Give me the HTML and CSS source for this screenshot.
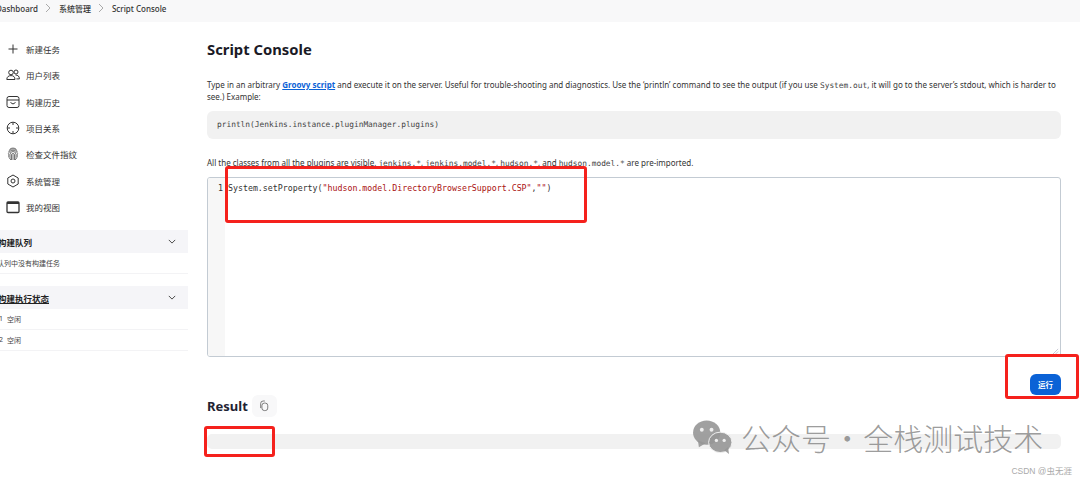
FILE: index.html
```html
<!DOCTYPE html>
<html lang="zh">
<head>
<meta charset="utf-8">
<title>Script Console</title>
<link rel="stylesheet" href="styles.css">
</head>
<body>
<nav class="crumbs">
  <span class="crumb first">Dashboard</span>
  <svg class="sep" viewBox="0 0 8 10"><path d="M2 1l4 4-4 4"/></svg>
  <span class="crumb">系统管理</span>
  <svg class="sep" viewBox="0 0 8 10"><path d="M2 1l4 4-4 4"/></svg>
  <span class="crumb">Script Console</span>
</nav>
<div class="page">
  <aside class="side">
    <ul class="tasks">
      <li><svg class="ico" viewBox="0 0 14 14"><path d="M7 2.500v9M2.500 7h9"/></svg>新建任务</li>
      <li><svg class="ico" viewBox="0 0 14 14"><circle cx="5" cy="4.500" r="2.300"/><circle cx="10" cy="4" r="2"/><path d="M.8 11.500c0-2.600 1.700-3.900 4.200-3.900s4 1.300 4 3.900zM9.500 7c2.400 0 3.900 1.300 3.900 3.900h-3"/></svg>用户列表</li>
      <li><svg class="ico" viewBox="0 0 14 14"><rect x="1" y="1.500" width="12" height="11" rx="2"/><path d="M1 5h12M4.500 7.500l2.500 1.500 2.500-1.500"/></svg>构建历史</li>
      <li><svg class="ico" viewBox="0 0 14 14"><circle cx="7" cy="7" r="5.800"/><path d="M7 1.500v2.500M7 10v2.500M1.500 7H4M10 7h2.500"/></svg>项目关系</li>
      <li><svg class="ico print" viewBox="0 0 14 14"><path d="M3.500 2.500a5 5 0 0 1 7 0M2.500 4.500a5.300 5.300 0 0 1 9 0M2.200 6.800a5 5 0 0 1 9.600 0M2.800 7v3.500M11.200 7v3.500M4 7.500a3 3 0 0 1 6 0V12M4 7.500V12M5.500 8a1.500 1.500 0 0 1 3 0v5M5.500 8v5M7 7.500V13M3.500 11.500l1.500 1.500M10.500 11.500L9 13"/></svg>检查文件指纹</li>
      <li><svg class="ico" viewBox="0 0 14 14"><path d="M7 1l5.200 3v6L7 13l-5.200-3V4z"/><circle cx="7" cy="7" r="2"/></svg>系统管理</li>
      <li><svg class="ico window" viewBox="0 0 14 14"><rect x="1" y="2" width="12" height="10.500" rx="1"/><path class="bar" d="M1 3h12"/></svg>我的视图</li>
    </ul>
    <section class="pane">
      <header class="pane-head"><span class="clip">构建队列</span><svg class="chev" viewBox="0 0 10 6"><path d="M1 1l4 4 4-4"/></svg></header>
      <div class="pane-row"><span class="clip-row">队列中没有构建任务</span></div>
    </section>
    <section class="pane">
      <header class="pane-head"><span class="clip under">构建执行状态</span><svg class="chev" viewBox="0 0 10 6"><path d="M1 1l4 4 4-4"/></svg></header>
      <div class="pane-row"><span class="num">1</span>空闲</div>
      <div class="pane-row"><span class="num">2</span>空闲</div>
    </section>
  </aside>
  <main class="main">
    <h1>Script Console</h1>
    <p class="intro">Type in an arbitrary <a href="#">Groovy script</a> and execute it on the server. Useful for trouble-shooting and diagnostics. Use the ‘println’ command to see the output (if you use <code>System.out</code>, it will go to the server’s stdout, which is harder to see.) Example:</p>
    <pre class="sample">println(Jenkins.instance.pluginManager.plugins)</pre>
    <p class="note">All the classes from all the plugins are visible. <code>jenkins.*</code>, <code>jenkins.model.*</code>, <code>hudson.*</code>, and <code>hudson.model.*</code> are pre-imported.</p>
    <div class="editor">
      <div class="gutter">1</div>
      <div class="code">System.setProperty(<span class="str">"hudson.model.DirectoryBrowserSupport.CSP"</span>,<span class="str">""</span>)</div>
      <svg class="grip" viewBox="0 0 8 8"><path d="M7 1L1 7M7 4L4 7"/></svg>
    </div>
    <div class="actions"><button class="run">运行</button></div>
    <div class="result-head">
      <h2>Result</h2>
      <span class="copy"><svg viewBox="0 0 12 14"><rect x="3.500" y="3.500" width="7" height="9" rx="3"/><path d="M2 9.500V4a3 3 0 0 1 3-3h2"/></svg></span>
    </div>
    <div class="result"></div>
  </main>
</div>
<div class="mark m1"></div>
<div class="mark m2"></div>
<div class="mark m3"></div>
<div class="wm">
  <svg viewBox="0 0 42 36"><ellipse cx="15" cy="13" rx="14" ry="12.500"/><path d="M6 21l1 7 7-4z"/><ellipse cx="29" cy="23" rx="12" ry="10.500" class="front"/><path d="M33 31l5 4-1-7z"/><circle cx="10" cy="10" r="2" class="eye"/><circle cx="20" cy="10" r="2" class="eye"/><circle cx="25" cy="21" r="1.700" class="eye"/><circle cx="33" cy="21" r="1.700" class="eye"/></svg>
  <span>公众号 · 全栈测试技术</span>
</div>
<div class="csdn">CSDN @虫无涯</div>
</body>
</html>
```
FILE: styles.css
```css
* { box-sizing: border-box; }
html, body { margin: 0; height: 481px; overflow: hidden; }
body {
  position: relative;
  background: #fff;
  color: #14141f;
  font-family: "Noto Sans", "Noto Sans CJK SC", sans-serif;
  font-size: 8px;
}
.crumbs {
  height: 22px;
  padding-bottom: 6px;
  background: #f8f8f9;
  display: flex;
  align-items: center;
  font-weight: 500;
  font-size: 8px;
  color: #333;
}
.crumb.first { margin-left: -4px; }
.sep { width: 8px; height: 10px; margin: 0 6.500px; fill: none; stroke: #aaa; stroke-width: 1; }
.page { display: flex; }
.side { width: 188px; flex: none; }
.tasks { list-style: none; margin: 0; padding: 14px 0 0; }
.tasks li {
  height: 26.300px;
  display: flex;
  align-items: center;
  padding-left: 6px;
  font-size: 8.500px;
  color: #333;
}
.ico { width: 14px; height: 14px; margin-right: 6px; fill: none; stroke: #333; stroke-width: 1; }
.print { stroke: #666; stroke-width: .9; }
.window { stroke-width: 1.300; }
.window .bar { stroke-width: 2; }
.pane { margin-bottom: 12px; }
.tasks + .pane { margin-top: 10px; }
.pane-head {
  height: 23px;
  background: #f5f5f8;
  display: flex;
  align-items: center;
  justify-content: space-between;
  padding-right: 12px;
  font-weight: 700;
  font-size: 8.500px;
  color: #222;
}
.clip { margin-left: -2px; }
.under { text-decoration: underline; }
.chev { width: 8px; height: 5px; fill: none; stroke: #444; stroke-width: 1.200; }
.pane-row {
  height: 21px;
  padding-bottom: 1px;
  display: flex;
  align-items: center;
  font-size: 7px;
  color: #444;
  border-bottom: 1px solid #f3f3f5;
}
.clip-row { margin-left: -3px; }
.num { width: 8px; margin-left: -1px; }
.main { width: 854px; margin-left: 19px; }
h1 { margin: 17px 0 0; font-size: 14.800px; line-height: 20px; font-weight: 700; color: #1a1a26; }
.intro { margin: 20px 0 0; line-height: 12px; color: #333; }
a { color: #0b62d6; font-weight: 700; text-decoration: underline; }
code { font-family: "DejaVu Sans Mono", monospace; font-size: 7.850px; line-height: 0; color: #444; }
.sample {
  margin: 8px 0 0;
  height: 28px;
  background: #f1f1f1;
  border-radius: 6px;
  padding: 0 10px;
  line-height: 28px;
  font-family: "DejaVu Sans Mono", monospace;
  font-size: 7.850px;
  color: #444;
}
.note { margin: 18px 0 0; line-height: 12px; color: #333; }
.editor {
  position: relative;
  display: flex;
  height: 180px;
  margin-top: 8px;
  border: 1px solid #c3cbd3;
  border-bottom-width: 1.500px;
  border-radius: 3px;
  font-family: "DejaVu Sans Mono", monospace;
  font-size: 8.280px;
  line-height: 12px;
  overflow: hidden;
}
.gutter { width: 17px; flex: none; background: #f7f7f7; text-align: right; padding: 4px 2px 0 0; color: #333; }
.code { padding: 4px 0 0 3px; color: #333; }
.str { color: #a11; }
.grip { position: absolute; right: 1px; bottom: 1px; width: 7px; height: 7px; fill: none; stroke: #aab; stroke-width: .7; }
.actions { display: flex; justify-content: flex-end; padding-top: 17px; }
.run {
  width: 31px;
  height: 21px;
  padding: 0;
  border: 0;
  border-radius: 6px;
  background: #0b62d6;
  color: #fff;
  font: 700 7.500px "Noto Sans CJK SC", sans-serif;
}
.result-head { display: flex; align-items: center; gap: 4px; }
h2 { margin: 0; font-size: 13px; line-height: 22px; font-weight: 700; color: #1f2333; }
.copy { width: 25px; height: 22px; border-radius: 6px; background: #f8f8f9; display: flex; align-items: center; justify-content: center; }
.copy svg { width: 10px; height: 12px; fill: none; stroke: #555; stroke-width: .9; }
.result { height: 15px; margin-top: 17px; background: #f1f1f1; border-radius: 5px; }
.mark { position: absolute; border: 3px solid #f5211c; border-radius: 3px; }
.m1 { left: 225px; top: 166px; width: 362px; height: 57px; }
.m2 { left: 1005px; top: 354px; width: 74px; height: 45px; }
.m3 { left: 204px; top: 426px; width: 71px; height: 31px; }
.wm {
  position: absolute;
  left: 692px;
  top: 419px;
  display: flex;
  align-items: center;
  gap: 8px;
  font-family: "Noto Sans CJK SC", sans-serif;
  font-weight: 300;
  font-size: 30px;
  word-spacing: -5.500px;
  line-height: 36px;
  color: rgba(130,130,130,.8);
  white-space: nowrap;
}
.wm svg { width: 41px; height: 35px; fill: rgba(150,150,150,.9); }
.wm .front { stroke: #f1f1f1; stroke-width: 1; }
.wm .eye { fill: #eee; }
.csdn {
  position: absolute;
  right: 8px;
  top: 464px;
  font-family: "Liberation Sans", "Noto Sans CJK SC", sans-serif;
  font-size: 8.500px;
  color: #aaa;
}
```
